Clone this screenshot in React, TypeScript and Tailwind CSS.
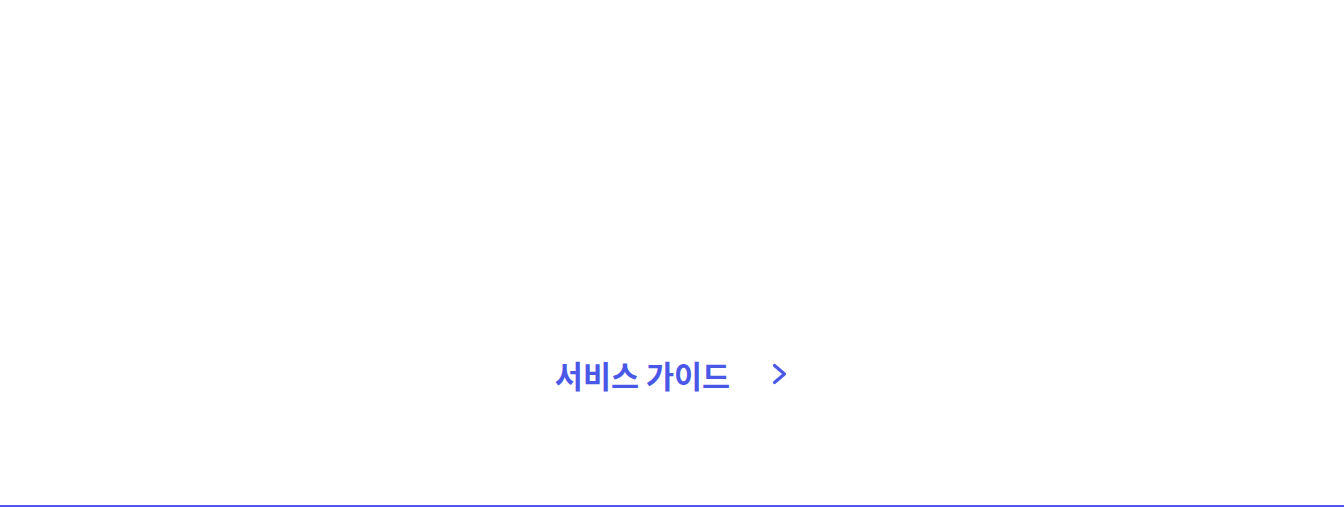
const ChevronRight = () => (
  <svg width="18" height="22" viewBox="0 0 18 22" fill="none">
    <path d="M3.5 2.5 L13.5 11 L3.5 19.5" stroke="currentColor" strokeWidth="3.2" strokeLinecap="round" strokeLinejoin="round" />
  </svg>
);

const App = () => {
  return (
    <div className="w-full h-[507px] bg-white flex flex-col border-b-2 border-[#5456ec]">
      <div className="flex-1 flex justify-center pt-[350px]">
        <a
          href="#"
          className="flex items-center h-[50px] gap-[41px] text-[#4a58e8] font-bold text-[30.5px] leading-none"
          style={{ fontFamily: '"Noto Sans CJK KR", "Noto Sans", sans-serif' }}
        >
          <span>서비스 가이드</span>
          <span className="pt-[-1px] -mt-[2px]">
            <ChevronRight />
          </span>
        </a>
      </div>
    </div>
  );
};

export default App;
